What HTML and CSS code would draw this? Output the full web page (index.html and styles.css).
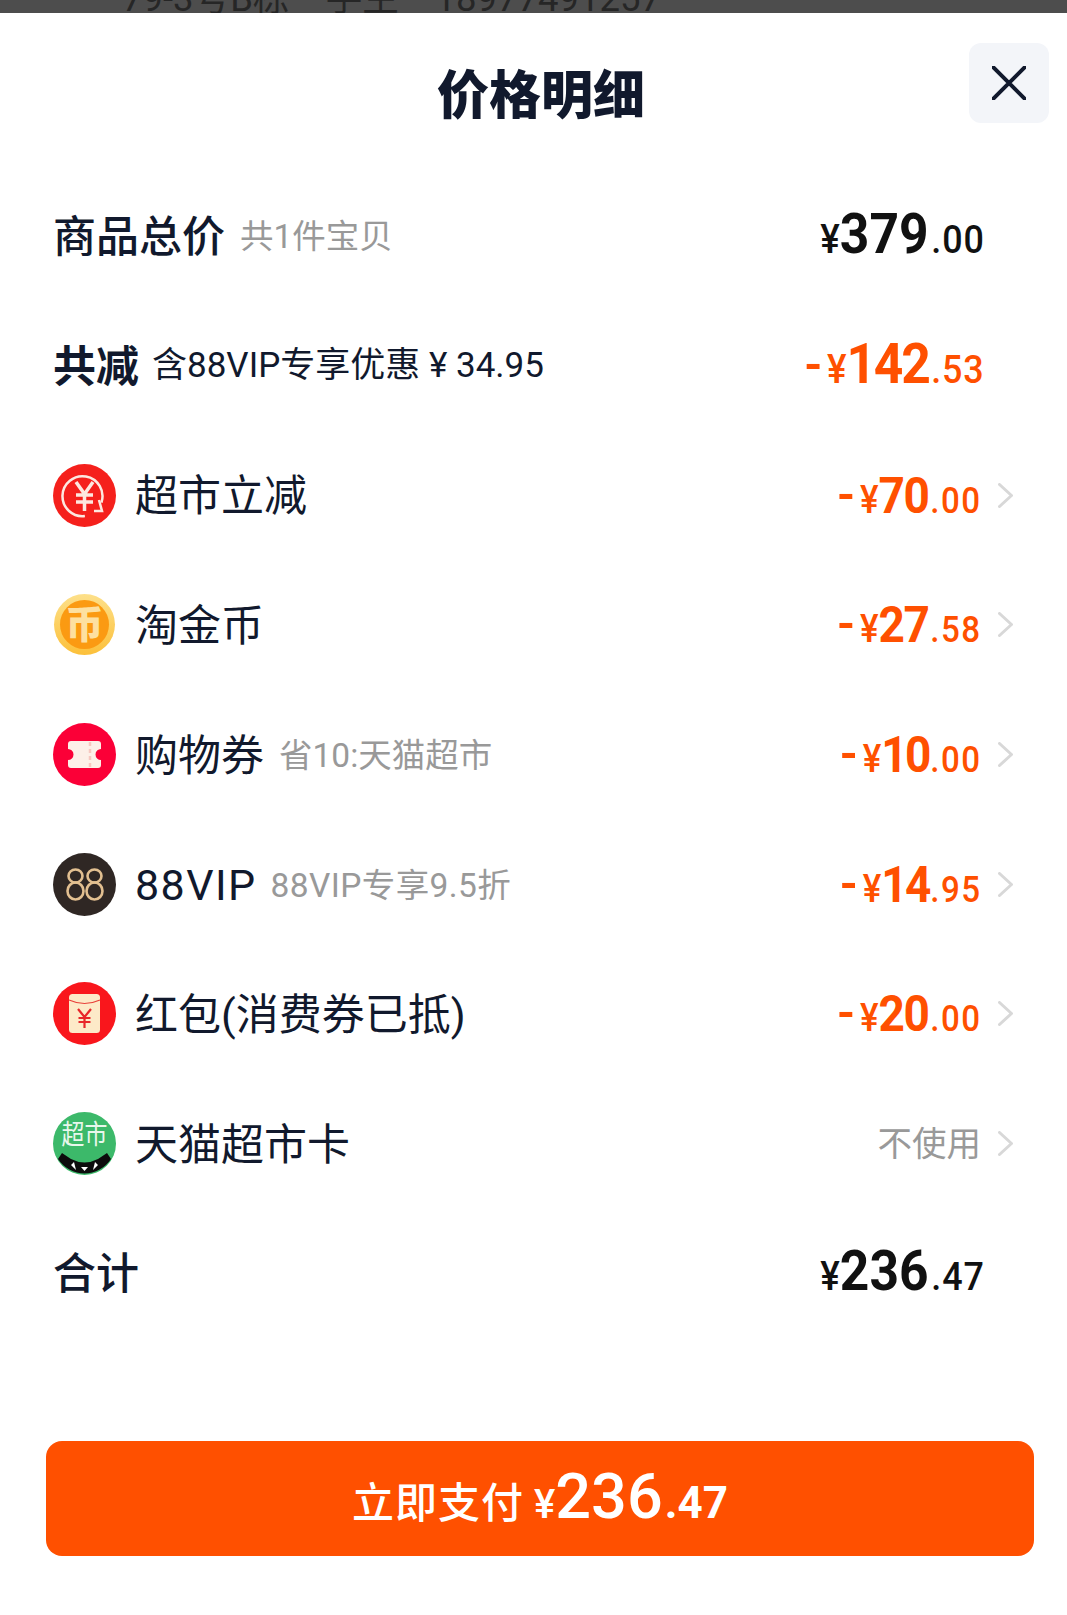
FILE: index.html
```html
<!DOCTYPE html>
<html lang="zh-CN">
<head>
<meta charset="utf-8">
<title>价格明细</title>
<link rel="stylesheet" href="styles.css">
</head>
<body>
<div class="backdrop"><span class="backdrop-text">79-3号B栋　手生　18977491257</span></div>
<main class="sheet">
  <header class="head">
    <h1 class="title">价格明细</h1>
    <button class="close" aria-label="关闭">
      <svg class="close-icon" viewBox="0 0 34 34"><path d="M1 1 33 33M33 1 1 33"/></svg>
    </button>
  </header>
  <section class="rows">
    <div class="row">
      <div class="left"><span class="label label-strong">商品总价</span><span class="sub">共1件宝贝</span></div>
      <div class="amount amount-lg"><span class="cur">¥</span><span class="big">379</span><span class="dec">.00</span></div>
    </div>
    <div class="row">
      <div class="left"><span class="label label-bold">共减</span><span class="sub sub-dark">含88VIP专享优惠 ¥ 34.95</span></div>
      <div class="amount amount-lg orange"><span class="dash">-</span><span class="cur">¥</span><span class="big tight">142</span><span class="dec">.53</span></div>
    </div>
    <div class="row">
      <div class="left">
        <svg class="icon" viewBox="0 0 63 63"><circle cx="31.500" cy="31.500" r="31.500" fill="#f5201c"/><path d="M45 47A20 20 0 1 1 49 26" transform="rotate(40 31.500 31.500)" fill="none" stroke="#fde8e0" stroke-width="2.500"/><path d="M46 36 49 47 41 47" fill="none" stroke="#fde8e0" stroke-width="2.500"/><path d="M23 18 31.500 30 40 18M23 31H40M23 38H40M31.500 30V47" fill="none" stroke="#fde8e0" stroke-width="3.500"/></svg>
        <span class="label">超市立减</span>
      </div>
      <div class="trail"><div class="amount orange"><span class="dash">-</span><span class="cur">¥</span><span class="big">70</span><span class="dec">.00</span></div><svg class="chev" viewBox="0 0 15 25"><path d="M1.500 1.500 13.500 12.500 1.500 23.500"/></svg></div>
    </div>
    <div class="row">
      <div class="left">
        <svg class="icon" viewBox="0 0 63 63"><defs><linearGradient id="coin" x1="0" y1="0" x2="0" y2="1"><stop offset="0" stop-color="#fde08a"/><stop offset="1" stop-color="#fcc03a"/></linearGradient></defs><circle cx="31.500" cy="31.500" r="30.500" fill="url(#coin)"/><circle cx="31.500" cy="31.500" r="24.500" fill="#fb9a12"/><text class="coin-text" x="31.500" y="45" text-anchor="middle">币</text></svg>
        <span class="label">淘金币</span>
      </div>
      <div class="trail"><div class="amount orange"><span class="dash">-</span><span class="cur">¥</span><span class="big">27</span><span class="dec">.58</span></div><svg class="chev" viewBox="0 0 15 25"><path d="M1.500 1.500 13.500 12.500 1.500 23.500"/></svg></div>
    </div>
    <div class="row">
      <div class="left">
        <svg class="icon" viewBox="0 0 63 63"><circle cx="31.500" cy="31.500" r="31.500" fill="#fb0037"/><path d="M18 18H45a3 3 0 0 1 3 3V26a5.500 5.500 0 0 0 0 11V42a3 3 0 0 1-3 3H18a3 3 0 0 1-3-3V37a5.500 5.500 0 0 0 0-11V21a3 3 0 0 1 3-3Z" fill="#fdf0e8"/><path d="M37 19V45" stroke="#f7c8c0" stroke-width="2.500" stroke-dasharray="4 3"/></svg>
        <span class="label">购物券</span><span class="sub">省10:天猫超市</span>
      </div>
      <div class="trail"><div class="amount orange"><span class="dash">-</span><span class="cur">¥</span><span class="big tight">10</span><span class="dec">.00</span></div><svg class="chev" viewBox="0 0 15 25"><path d="M1.500 1.500 13.500 12.500 1.500 23.500"/></svg></div>
    </div>
    <div class="row">
      <div class="left">
        <svg class="icon" viewBox="0 0 63 63"><circle cx="31.500" cy="31.500" r="31.500" fill="#2f2724"/><g fill="none" stroke="#e2bf90" stroke-width="2.600"><ellipse cx="22.500" cy="23" rx="7" ry="6.500"/><ellipse cx="22.500" cy="38" rx="8" ry="8.500"/><ellipse cx="41.500" cy="23" rx="7" ry="6.500"/><ellipse cx="41.500" cy="38" rx="8" ry="8.500"/></g></svg>
        <span class="label latin">88VIP</span><span class="sub sub-latin">88VIP专享9.5折</span>
      </div>
      <div class="trail"><div class="amount orange"><span class="dash">-</span><span class="cur">¥</span><span class="big tight">14</span><span class="dec">.95</span></div><svg class="chev" viewBox="0 0 15 25"><path d="M1.500 1.500 13.500 12.500 1.500 23.500"/></svg></div>
    </div>
    <div class="row">
      <div class="left">
        <svg class="icon" viewBox="0 0 63 63"><circle cx="31.500" cy="31.500" r="31.500" fill="#f9161c"/><rect x="16" y="12" width="31" height="39" rx="3.500" fill="#fdeac8"/><path d="M16 18Q31.500 25 47 18" fill="none" stroke="#e8413a" stroke-width="1.200"/><path d="M25 27 31.500 35 38 27M25.500 36H37.500M25.500 40H37.500M31.500 35V46" fill="none" stroke="#e8262a" stroke-width="2.200"/></svg>
        <span class="label">红包(消费券已抵)</span>
      </div>
      <div class="trail"><div class="amount orange"><span class="dash">-</span><span class="cur">¥</span><span class="big">20</span><span class="dec">.00</span></div><svg class="chev" viewBox="0 0 15 25"><path d="M1.500 1.500 13.500 12.500 1.500 23.500"/></svg></div>
    </div>
    <div class="row">
      <div class="left">
        <svg class="icon" viewBox="0 0 63 63"><circle cx="31.500" cy="31.500" r="31.500" fill="#3cb96a"/><text class="shop-text" transform="translate(31.500 32) scale(.85 1)" text-anchor="middle">超市</text><path d="M5 47 9 41 18 47Q31.500 54 45 47L54 41 58 47A31.500 31.500 0 0 1 5 47Z" fill="#0c0c0c"/><path d="M18 53 21 50 23 58ZM45 53 42 50 40 58Z" fill="#fff"/><path d="M28 55H35L31.500 59Z" fill="#fff"/></svg>
        <span class="label">天猫超市卡</span>
      </div>
      <div class="trail"><span class="unused">不使用</span><svg class="chev" viewBox="0 0 15 25"><path d="M1.500 1.500 13.500 12.500 1.500 23.500"/></svg></div>
    </div>
    <div class="row">
      <div class="left"><span class="label label-strong">合计</span></div>
      <div class="amount amount-lg"><span class="cur">¥</span><span class="big">236</span><span class="dec">.47</span></div>
    </div>
  </section>
  <button class="pay"><span class="pay-text">立即支付</span><span class="pay-amount"><span class="pay-cur">¥</span><span class="pay-big">236</span><span class="pay-dec">.47</span></span></button>
</main>
</body>
</html>
```
FILE: styles.css
```css
* { box-sizing: border-box; }
html, body { margin: 0; padding: 0; }
body {
  width: 1067px;
  height: 1615px;
  overflow: hidden;
  background: #fff;
  font-family: Roboto, "Noto Sans CJK SC", "Noto Sans", sans-serif;
  color: #11192d;
}
.backdrop {
  height: 13px;
  background: #4d4d4d;
  overflow: hidden;
  padding-left: 122px;
}
.backdrop-text {
  display: block;
  margin-top: -26px;
  font-size: 36.500px;
  line-height: 50px;
  color: #262626;
  white-space: nowrap;
}
.sheet {
  background: #fff;
  border-radius: 24px 24px 0 0;
  height: 1602px;
  position: relative;
}
.head {
  height: 158px;
  display: flex;
  justify-content: center;
  padding: 56px 0 0 15px;
  position: relative;
}
.title {
  margin: 0;
  font-size: 52px;
  line-height: 56px;
  font-weight: 900;
  color: #11192d;
}
.close {
  position: absolute;
  right: 18px;
  top: 30px;
  width: 80px;
  height: 80px;
  border: 0;
  border-radius: 12px;
  background: #f3f5f9;
  padding: 0;
  display: flex;
  align-items: center;
  justify-content: center;
}
.close-icon { width: 34px; height: 34px; }
.close-icon path { fill: none; stroke: #11192d; stroke-width: 4; stroke-linecap: round; }
.rows { padding: 0 82px 0 53px; }
.row {
  height: 129.7px;
  display: flex;
  align-items: center;
  justify-content: space-between;
}
.left { display: flex; align-items: center; white-space: nowrap; }
.icon { width: 63px; height: 63px; margin-right: 19px; flex: none; }
.label { font-size: 43px; line-height: 58px; margin-top: 2px; }
.label-strong { font-weight: 500; }
.label-bold { font-weight: 700; }
.latin { letter-spacing: 1.400px; }
.sub { font-size: 33.500px; line-height: 48px; color: #999; margin: 3px 0 0 15px; }
.sub-dark { color: #11192d; font-size: 35px; margin: 1px 0 0 13px; }
.sub-latin { letter-spacing: .400px; margin-left: 14px; }
.trail { display: flex; align-items: center; margin-right: -28px; }
.amount {
  font-family: Roboto, "Liberation Sans", sans-serif;
  font-weight: 500;
  white-space: nowrap;
  transform: scaleX(.92);
  transform-origin: right center;
  color: #111;
  line-height: 60px;
  padding-top: 12px;
}
.amount-lg { padding-top: 10px; }
.orange { color: #ff5000; }
.dash { font-size: 54px; margin-right: 6px; }
.cur { font-size: 38px; }
.big { font-size: 50px; font-weight: 700; letter-spacing: -1.500px; }
.big.tight { letter-spacing: -3px; }
.dec { font-size: 36px; letter-spacing: 1.500px; margin-left: 2px; }
.amount-lg .cur { font-size: 40px; }
.amount-lg .big { font-size: 56px; letter-spacing: 0; }
.amount-lg .big.tight { letter-spacing: -2.500px; }
.amount-lg .dec { font-size: 39px; letter-spacing: 1px; margin-left: 3px; }
.chev { width: 15px; height: 25px; margin-left: 17px; flex: none; }
.chev path { fill: none; stroke: #d8d8d8; stroke-width: 3; stroke-linecap: round; stroke-linejoin: round; }
.unused { font-size: 34.500px; line-height: 48px; color: #999; }
.coin-text { font-size: 38px; font-weight: 900; fill: #fde0a0; }
.shop-text { font-size: 27px; fill: #e8f7ec; }
.pay {
  display: flex;
  align-items: center;
  justify-content: center;
  width: 988px;
  height: 115px;
  margin: 103px 0 0 46px;
  border: 0;
  border-radius: 16px;
  background: #ff5000;
  color: #fff;
  font-family: inherit;
  padding: 0;
}
.pay-text { font-size: 42px; line-height: 58px; font-weight: 500; letter-spacing: 1px; margin-top: 10px; }
.pay-amount {
  font-family: Roboto, "Liberation Sans", sans-serif;
  font-weight: 500;
  white-space: nowrap;
  line-height: 70px;
  margin: 14px 0 0 10px;
}
.pay-cur { font-size: 40px; }
.pay-big { font-size: 63px; }
.pay-dec { font-size: 44px; margin-left: 2px; font-weight: 700; }
```
